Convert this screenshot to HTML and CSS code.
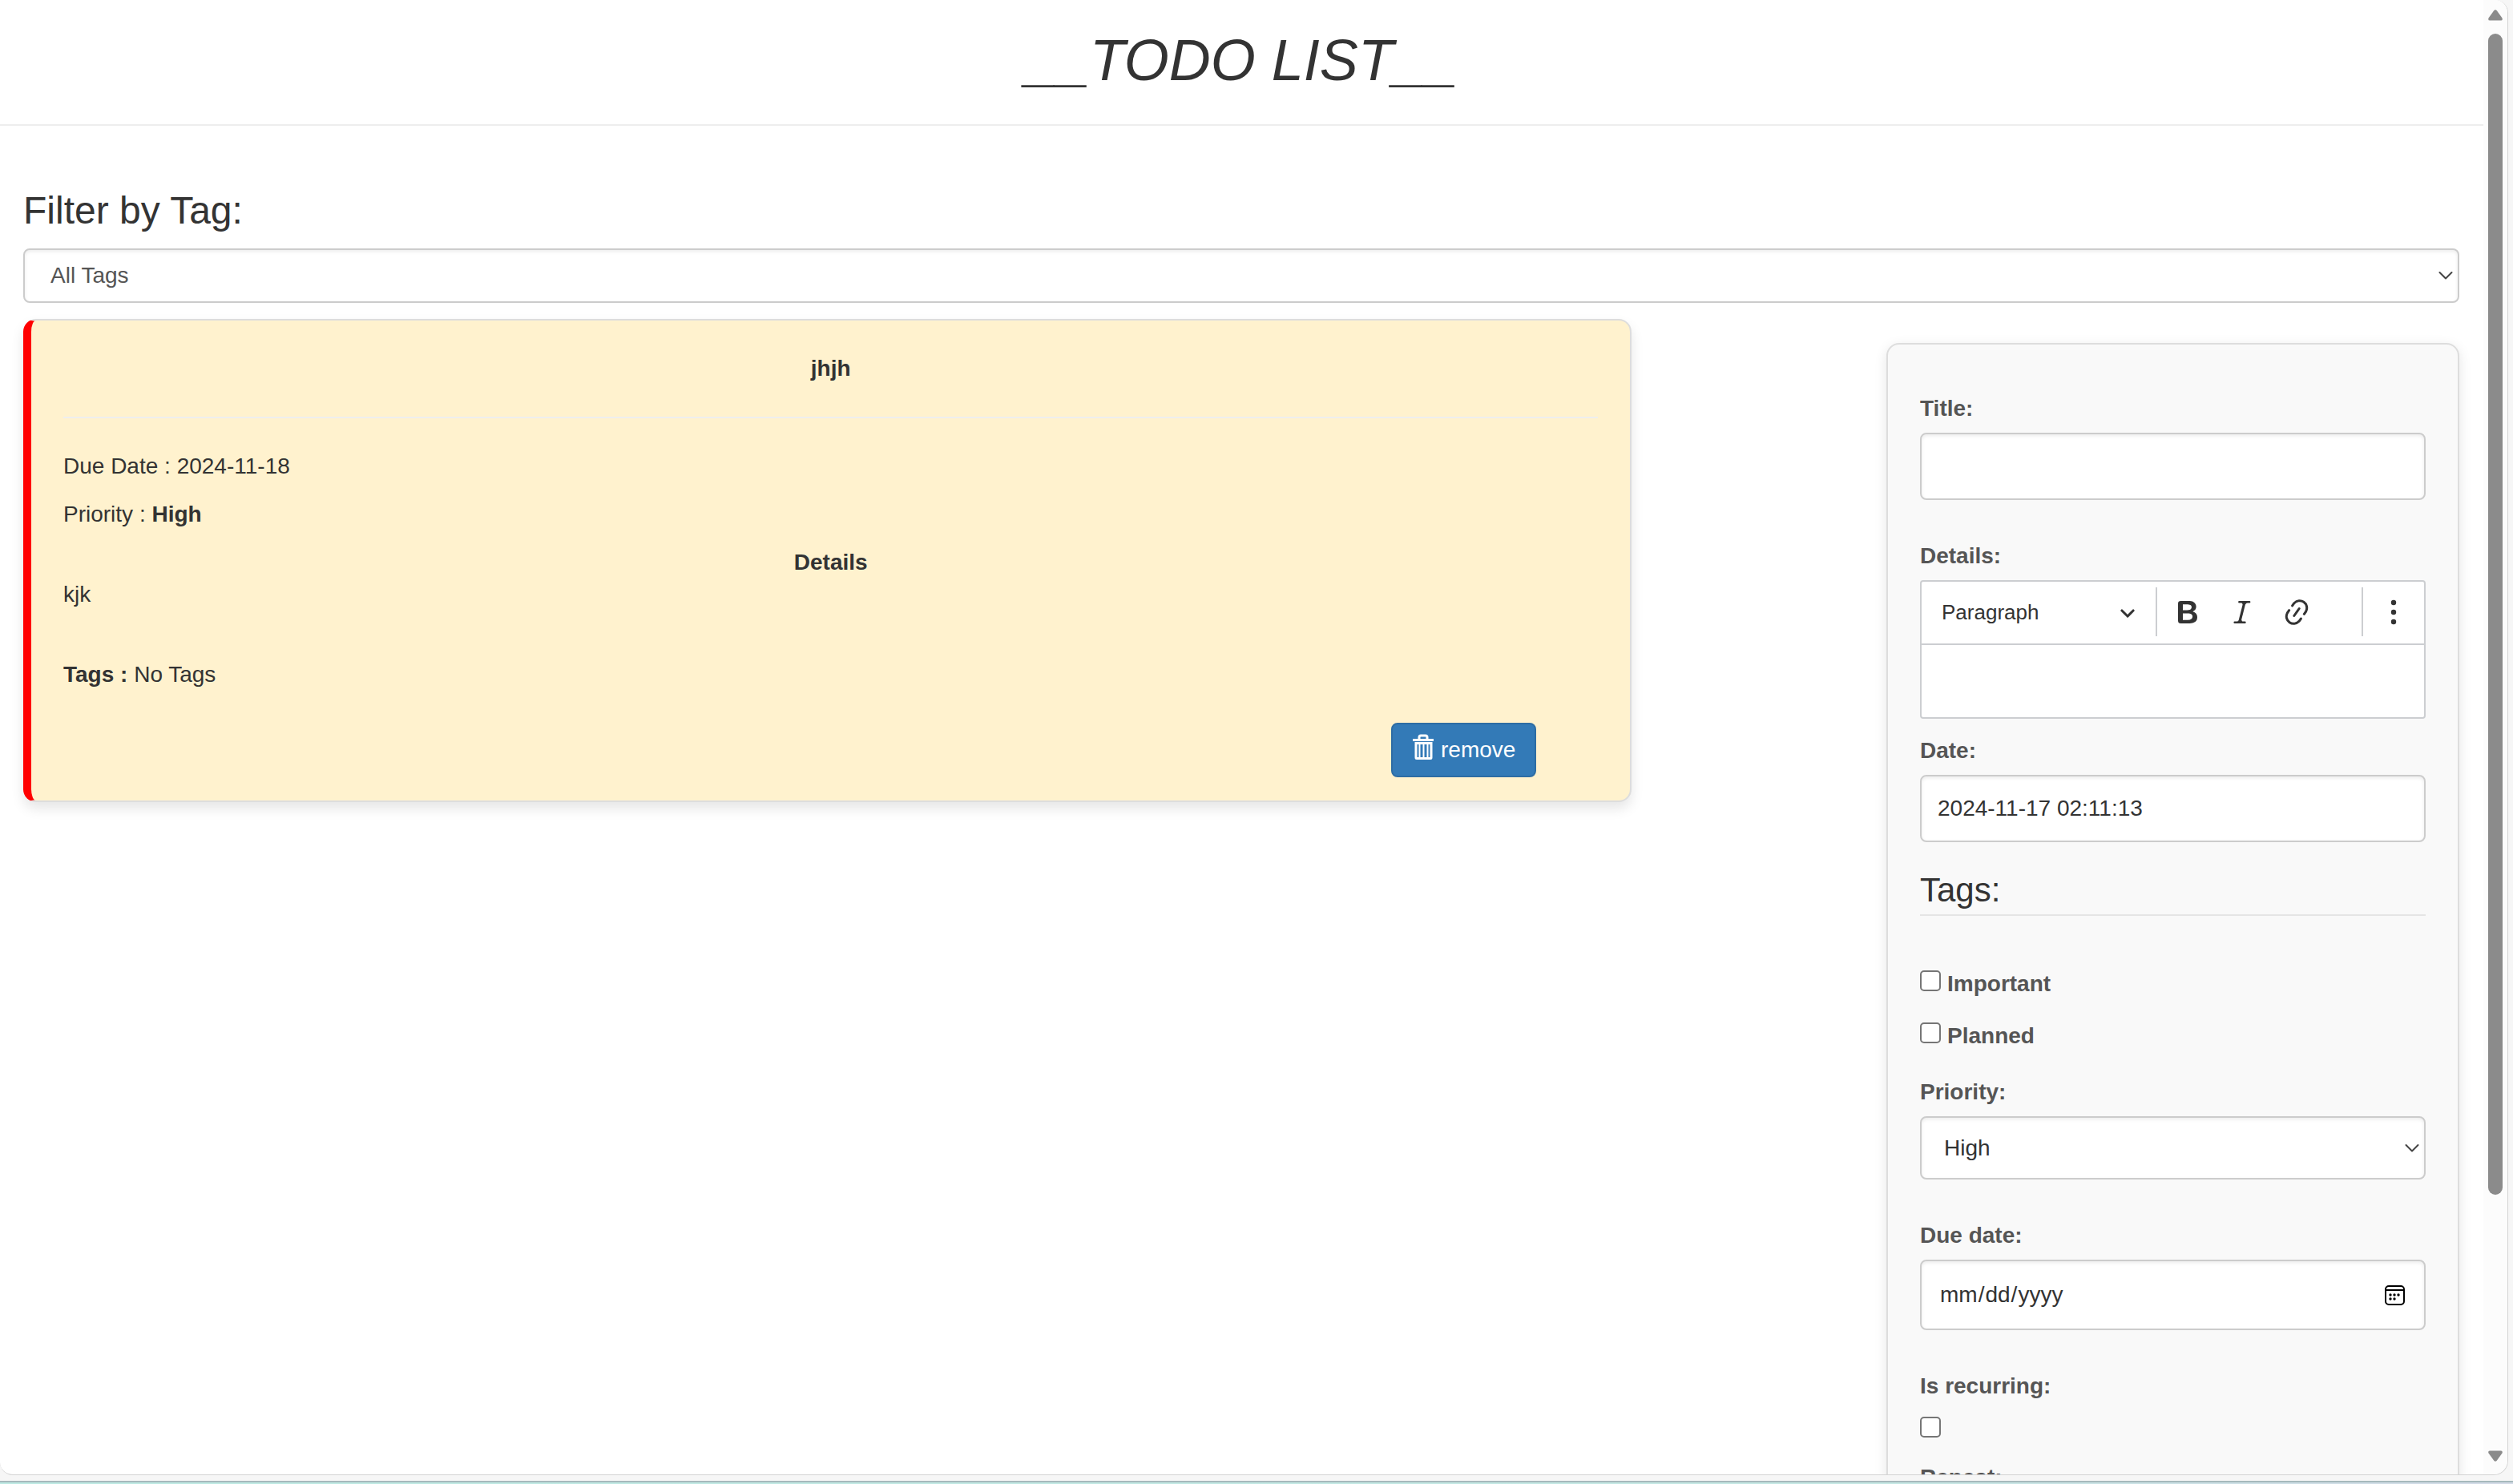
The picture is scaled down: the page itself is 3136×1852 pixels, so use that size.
FILE: index.html
```html
<!DOCTYPE html>
<html lang="en">
<head>
<meta charset="utf-8">
<title>Todo List</title>
<link rel="stylesheet" href="styles.css">
</head>
<body>
<div class="frame">
  <div class="window">
    <div class="page">
      <header class="page-header"><h1><em>__TODO LIST__</em></h1></header>
      <main class="content">
        <h3 class="filter-title"><label for="filter">Filter by Tag:</label></h3>
        <select id="filter" class="control select filter"><option>All Tags</option></select>
        <div class="columns">
          <article class="card">
            <p class="center"><b>jhjh</b></p>
            <hr>
            <p>Due Date : 2024-11-18</p>
            <p>Priority : <b>High</b></p>
            <div class="center"><b>Details</b></div>
            <div class="details">kjk</div>
            <div><b>Tags : </b>No Tags</div>
            <div class="actions">
              <button type="button" class="remove">
                <svg width="28" height="32" viewBox="0 0 28 32" fill="none" stroke="#fff" aria-hidden="true">
                  <path d="M1 7.500h26" stroke-width="3"/>
                  <path d="M9 6V4q0-2 2-2h6q2 0 2 2v2" stroke-width="3"/>
                  <path d="M5 11.500h19v18q0 1-1 1h-17q-1 0-1-1z" stroke-width="3"/>
                  <path d="M9.500 12v17M14.500 12v17M19.500 12v17" stroke-width="2"/>
                </svg>
                <span>remove</span>
              </button>
            </div>
          </article>

          <form class="form">
            <div class="field">
              <label for="title">Title:</label>
              <input id="title" class="control text" type="text">
            </div>
            <div class="field tight">
              <label for="details">Details:</label>
              <div class="editor">
                <div class="toolbar">
                  <button type="button" class="heading">Paragraph
                    <svg width="20" height="20" viewBox="0 0 10 10" aria-hidden="true"><path d="M.941 4.523a.75.75 0 1 1 1.06-1.06l3.006 3.005 3.005-3.005a.75.75 0 1 1 1.06 1.06l-3.549 3.55a.75.75 0 0 1-1.168-.136L.941 4.523z"/></svg>
                  </button>
                  <span class="separator"></span>
                  <button type="button" class="tool" aria-label="Bold"><svg width="40" height="40" viewBox="0 0 20 20"><path d="M10.187 17H5.773c-.637 0-1.092-.138-1.364-.415-.273-.277-.409-.718-.409-1.323V4.738c0-.617.14-1.062.419-1.332.279-.27.73-.406 1.354-.406h4.68c.69 0 1.288.041 1.793.124.506.083.96.242 1.36.478.341.197.644.447.906.75a3.262 3.262 0 0 1 .808 2.162c0 1.401-.722 2.426-2.167 3.075C15.05 10.175 16 11.315 16 13.01a3.756 3.756 0 0 1-2.296 3.504 6.1 6.1 0 0 1-1.517.377c-.571.073-1.238.11-2 .11zm-.217-6.217H7v4.087h3.069c1.977 0 2.965-.69 2.965-2.072 0-.707-.256-1.22-.768-1.537-.512-.319-1.277-.478-2.296-.478zM7 5.13v3.619h2.606c.729 0 1.292-.067 1.69-.2a1.6 1.6 0 0 0 .91-.765c.165-.267.247-.566.247-.897 0-.707-.26-1.176-.778-1.409-.519-.232-1.31-.348-2.375-.348H7z"/></svg></button>
                  <button type="button" class="tool" aria-label="Italic"><svg width="40" height="40" viewBox="0 0 20 20"><path d="m9.586 14.633.021.004c-.036.335.095.655.393.962.082.083.173.15.274.201h1.474a.6.6 0 1 1 0 1.2H5.304a.6.6 0 0 1 0-1.2h1.15c.474-.07.809-.182 1.005-.334.157-.122.291-.32.404-.597l2.416-9.55a1.053 1.053 0 0 0-.281-.823 1.12 1.12 0 0 0-.442-.296H8.15a.6.6 0 0 1 0-1.2h6.443a.6.6 0 1 1 0 1.2h-1.195c-.376.056-.65.155-.823.296-.215.175-.423.439-.623.79l-2.366 9.347z"/></svg></button>
                  <button type="button" class="tool" aria-label="Link"><svg width="40" height="40" viewBox="0 0 20 20"><path d="m11.077 15 .991-1.416a.75.75 0 1 1 1.229.86l-1.148 1.64a.748.748 0 0 1-.217.206 5.251 5.251 0 0 1-8.503-5.955.741.741 0 0 1 .12-.274l1.147-1.639a.75.75 0 1 1 1.228.86L4.933 10.7l.006.003a3.75 3.75 0 0 0 6.132 4.294l.006.004zm5.494-5.335a.748.748 0 0 1-.12.274l-1.147 1.639a.75.75 0 1 1-1.228-.86l.86-1.23a3.75 3.75 0 0 0-6.144-4.301l-.86 1.229a.75.75 0 0 1-1.229-.86l1.148-1.64a.748.748 0 0 1 .217-.206 5.251 5.251 0 0 1 8.503 5.955zm-4.563-2.532a.75.75 0 0 1 .184 1.045l-3.155 4.505a.75.75 0 1 1-1.229-.86l3.155-4.506a.75.75 0 0 1 1.045-.184z"/></svg></button>
                  <span class="separator last"></span>
                  <button type="button" class="tool" aria-label="Show more items"><svg width="40" height="40" viewBox="0 0 20 20"><circle cx="10" cy="4" r="1.6"/><circle cx="10" cy="10" r="1.6"/><circle cx="10" cy="16" r="1.6"/></svg></button>
                </div>
                <textarea id="details" rows="1"></textarea>
              </div>
            </div>
            <div class="field medium">
              <label for="date">Date:</label>
              <input id="date" class="control text" type="text" value="2024-11-17 02:11:13">
            </div>
            <fieldset>
              <legend>Tags:</legend>
              <div class="checks">
                <label class="check"><input type="checkbox">Important</label>
                <label class="check"><input type="checkbox">Planned</label>
              </div>
            </fieldset>
            <div class="field">
              <label for="priority">Priority:</label>
              <select id="priority" class="control select priority"><option>High</option></select>
            </div>
            <div class="field">
              <label for="due">Due date:</label>
              <input id="due" class="control due" type="date">
            </div>
            <div class="field medium">
              <label for="recurring">Is recurring:</label>
              <input id="recurring" class="lone" type="checkbox">
            </div>
            <div class="field">
              <label for="repeat">Repeat:</label>
              <input id="repeat" class="control text" type="text">
            </div>
          </form>
        </div>
      </main>
    </div>
    <div class="scrollbar" aria-hidden="true">
      <svg width="18" height="14" viewBox="0 0 18 14"><path d="M7 1.500q2-2.500 4 0l6.500 9q1 3-1.500 3h-14q-2.500 0-1.500-3z"/></svg>
      <div class="track"><div class="thumb"></div></div>
      <svg width="18" height="14" viewBox="0 0 18 14"><path d="M7 12.500q2 2.500 4 0l6.500-9q1-3-1.500-3h-14q-2.500 0-1.500 3z"/></svg>
    </div>
  </div>
  <div class="desktop-edge"></div>
</div>
</body>
</html>
```
FILE: styles.css
```css
* { box-sizing: border-box; }

body {
  margin: 0;
  font: 28px/40px "Liberation Sans", Arial, sans-serif;
  color: #333;
}

.frame {
  display: flex;
  flex-direction: column;
  height: 100vh;
  overflow: hidden;
  background: #f6f6f6;
}

.window {
  display: flex;
  flex: 1;
  min-height: 0;
  margin: 0 6px 7px 0;
  border: solid #d4d4d4;
  border-width: 0 1px 1px 0;
  border-radius: 0 16px 18px 16px;
  background: #fff;
  overflow: hidden;
}

.desktop-edge {
  flex: none;
  height: 4px;
  border-top: 2px solid #a6b9bc;
  background: linear-gradient(90deg, #bdeae3, #c5e8e4 75%, #d3dae7);
}

.page {
  flex: 1;
  min-width: 0;
  overflow: hidden;
}

.page-header {
  padding: 36px 0 40px;
  border-bottom: 2px solid #eee;
  text-align: center;
}

h1, h3 { margin: 0; font-weight: 400; }
h1 { font-size: 72px; line-height: 79px; }
h3 { font-size: 48px; line-height: 53px; }

.content { padding: 79px 30px 0 29px; }
.filter-title { margin-bottom: 21px; }

.control {
  display: block;
  width: 100%;
  border: 2px solid #ccc;
  border-radius: 8px;
  background-color: #fff;
  box-shadow: inset 0 2px 4px rgba(0, 0, 0, .08);
  color: #333;
  font: inherit;
}

.select {
  appearance: none;
  background-image: url("data:image/svg+xml,%3Csvg xmlns='http://www.w3.org/2000/svg' width='18' height='12'%3E%3Cpath d='M1.500 2l7.500 7.500L16.500 2' fill='none' stroke='%23444' stroke-width='2' stroke-linecap='round' stroke-linejoin='round'/%3E%3C/svg%3E");
  background-repeat: no-repeat;
  background-position: right 6px center;
}

.filter { height: 68px; padding: 0 32px; color: #555; }
.priority { height: 79px; padding: 0 28px; }
.text { height: 84px; padding: 0 20px; }
.due { height: 88px; padding: 0 24px 0 22px; }

.due::-webkit-calendar-picker-indicator {
  width: 26px;
  height: 26px;
  padding: 0;
  background: url("data:image/svg+xml,%3Csvg xmlns='http://www.w3.org/2000/svg' width='26' height='26'%3E%3Crect x='2' y='2' width='23' height='23' rx='4' fill='none' stroke='%23000' stroke-width='2'/%3E%3Cpath d='M2 7h23' stroke='%23000' stroke-width='2'/%3E%3Cg%3E%3Ccircle cx='8' cy='13' r='1.700'/%3E%3Ccircle cx='13' cy='13' r='1.700'/%3E%3Ccircle cx='18' cy='13' r='1.700'/%3E%3Ccircle cx='8' cy='18' r='1.700'/%3E%3Ccircle cx='13' cy='18' r='1.700'/%3E%3C/g%3E%3C/svg%3E") center no-repeat;
}

.columns {
  display: flex;
  justify-content: space-between;
  align-items: flex-start;
  margin-top: 20px;
}

.card {
  width: calc(66% + 1px);
  padding: 40px 40px 29px;
  border: 2px solid #ddd;
  border-left: 10px solid #f00;
  border-radius: 16px;
  background: #fff2ce;
  box-shadow: 0 8px 16px rgba(0, 0, 0, .1);
}

.card p { margin: 0 0 20px; }
.center { text-align: center; }
.card hr {
  margin: 40px 0;
  border: 0;
  border-top: 2px solid #eee;
}
.details { margin-bottom: 60px; }

.actions {
  display: flex;
  justify-content: flex-end;
  margin-top: 40px;
  padding-right: 77px;
}

.remove {
  display: flex;
  gap: 8px;
  height: 68px;
  padding: 12px 24px;
  border: 2px solid #2e6da4;
  border-radius: 8px;
  background: #337ab7;
  color: #fff;
  font: inherit;
}

.form {
  width: 715px;
  margin-top: 30px;
  padding: 60px 40px;
  border: 2px solid #ddd;
  border-radius: 16px;
  background: #f9f9f9;
  box-shadow: 0 4px 16px rgba(0, 0, 0, .1);
}

.field { margin-bottom: 50px; }
.field.tight { margin-bottom: 20px; }
.field.medium { margin-bottom: 30px; }

.form label {
  display: block;
  margin-bottom: 10px;
  color: #555;
  font-weight: 700;
}

.editor {
  border: 2px solid #ccced1;
  border-radius: 4px;
  background: #fff;
}

.toolbar {
  display: flex;
  align-items: center;
  gap: 7px;
  height: 79px;
  padding: 0 8px 2px;
  border-bottom: 2px solid #ccced1;
}

.toolbar button {
  display: flex;
  align-items: center;
  height: 60px;
  border: 0;
  background: none;
  color: #333;
  font: 26px/40px "Liberation Sans", Arial, sans-serif;
}
.toolbar svg { fill: #333; }
.heading { width: 277px; justify-content: space-between; padding: 0 18px 0 17px; }
.tool { width: 61px; justify-content: center; padding: 0; }
.separator { width: 2px; height: 61px; background: #ccced1; }
.separator.last { margin-left: auto; }

.editor textarea {
  display: block;
  width: 100%;
  height: 90px;
  padding: 20px;
  border: 0;
  background: none;
  font: inherit;
  resize: none;
}

fieldset { margin: 0 0 30px; padding: 0; border: 0; }

legend {
  width: 100%;
  padding: 0;
  border-bottom: 2px solid #e5e5e5;
  font-size: 42px;
  line-height: 60px;
}

.checks { display: grid; gap: 25px; padding-top: 65px; }
.form .check { display: flex; gap: 8px; margin: 0; }

input[type="checkbox"] {
  appearance: none;
  display: block;
  width: 26px;
  height: 26px;
  margin: 3px 0 0;
  border: 2px solid #767676;
  border-radius: 5px;
  background: #fff;
}
.form .lone { margin-top: 18px; }

.scrollbar {
  display: flex;
  flex-direction: column;
  align-items: center;
  width: 30px;
  padding: 12px 0 16px;
  background: #fcfcfc;
}
.scrollbar svg { flex: none; fill: #8b8b8b; }
.track { flex: 1; width: 18px; padding: 16px 0; }
.thumb { height: 82.7%; border-radius: 9px; background: #8b8b8b; }
```
